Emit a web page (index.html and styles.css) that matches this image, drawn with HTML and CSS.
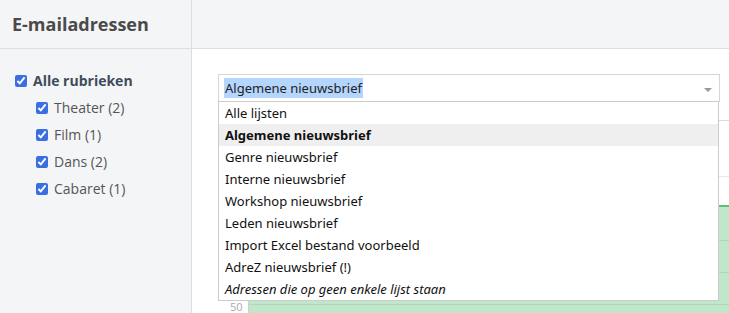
FILE: index.html
```html
<html lang="nl">
<head>
  <meta charset="UTF-8" />
  <title>E-mailadressen</title>
  <link rel="stylesheet" href="styles.css">
</head>

<body>
  <div class="page">
    <aside class="sidebar">
      <div class="head">
        <h1>E-mailadressen</h1>
      </div>

      <ul class="rubrieken">
        <li class="all"><label><input type="checkbox" checked> Alle rubrieken</label></li>
        <li class="sub"><label><input type="checkbox" checked> Theater (2)</label></li>
        <li class="sub"><label><input type="checkbox" checked> Film (1)</label></li>
        <li class="sub"><label><input type="checkbox" checked> Dans (2)</label></li>
        <li class="sub"><label><input type="checkbox" checked> Cabaret (1)</label></li>
      </ul>
    </aside>

    <main class="content">
      <div class="head"></div>

      <div class="body">
        <!-- select met open lijst -->
        <div class="select">
          <span class="current"><span class="selected-text">Algemene nieuwsbrief</span></span>
          <span class="arrow"></span>

          <ul class="options">
            <li>Alle lijsten</li>
            <li class="active">Algemene nieuwsbrief</li>
            <li>Genre nieuwsbrief</li>
            <li>Interne nieuwsbrief</li>
            <li>Workshop nieuwsbrief</li>
            <li>Leden nieuwsbrief</li>
            <li>Import Excel bestand voorbeeld</li>
            <li>AdreZ nieuwsbrief (!)</li>
            <li class="none">Adressen die op geen enkele lijst staan</li>
          </ul>
        </div>

        <!-- paneel achter de lijst -->
        <div class="panel">
          <div class="tabs"></div>
          <div class="chart">
            <div class="axis"><span>50</span></div>
            <div class="plot">
              <div class="grid"></div>
              <div class="grid"></div>
              <div class="grid"></div>
            </div>
          </div>
        </div>
      </div>
    </main>
  </div>
</body>
</html>
```

FILE: styles.css
```css
body {
  margin: 0;
  font-family: "Open Sans", "Noto Sans", sans-serif;
  background: #fff;
  overflow: hidden;
}

.page {
  display: grid;
  grid-template-columns: 192px 1fr;
  width: 729px;
  height: 313px;
}

.head {
  height: 48px;
  background: #f4f5f7;
  border-bottom: 1px solid #dcdee3;
  display: flex;
  align-items: center;
}

h1 {
  margin: 0 0 0 12px;
  font-size: 18px;
  font-weight: 700;
  color: #4a4a4a;
}

.sidebar {
  background: #f4f5f7;
  border-right: 1px solid #dcdee3;
}

.rubrieken {
  list-style: none;
  margin: 0;
  padding: 18px 0 0 15px;
}

.rubrieken li {
  height: 27px;
  display: flex;
  align-items: center;
  font-size: 14px;
  color: #555;
}

.rubrieken label {
  display: flex;
  align-items: center;
  gap: 6px;
}

.rubrieken input {
  margin: 0;
  width: 12px;
  height: 12px;
  accent-color: #3a6fe4;
}

.rubrieken .all {
  font-weight: 700;
  color: #3f4b5b;
}

.rubrieken .sub {
  padding-left: 21px;
}

.content {
  min-width: 0;
}

.content .body {
  padding: 25px 9px 0 26px;
}

.select {
  position: relative;
  height: 26px;
  border: 1px solid #d6d6d6;
  display: flex;
  align-items: center;
  padding-left: 5px;
  font-family: "Noto Sans", "Open Sans", sans-serif;
  font-size: 13px;
  color: #222;
}

.selected-text {
  background: #b4d5fe;
  padding: 1px 1px;
}

.arrow {
  position: absolute;
  right: 7px;
  top: 13px;
  border-left: 4px solid transparent;
  border-right: 4px solid transparent;
  border-top: 4px solid #999;
}

.options {
  position: absolute;
  z-index: 2;
  top: 26px;
  left: -1px;
  width: 499px;
  margin: 0;
  padding: 0;
  list-style: none;
  background: #fff;
  border: 1px solid #ccc;
}

.options li {
  height: 22px;
  line-height: 22px;
  padding-left: 6px;
  color: #111;
  white-space: nowrap;
}

.options .active {
  background: #efefef;
  font-weight: 700;
}

.options .none {
  font-style: italic;
}

.panel {
  margin-top: 18px;
  margin-right: -9px;
  border-top: 1px solid #dcdcdc;
}

.tabs {
  height: 55px;
  border-bottom: 1px solid #e8e8e8;
}

.chart {
  display: flex;
  margin-top: 28px;
  height: 120px;
}

.axis {
  width: 30px;
  position: relative;
  font-size: 11px;
  color: #aaa;
}

.axis span {
  position: absolute;
  left: 12px;
  top: 94px;
}

.plot {
  flex: 1;
  background: #c1e7cb;
  border-top: 2px solid #62bd74;
  border-left: 1px solid #cfcfcf;
  display: flex;
  flex-direction: column;
  gap: 31px;
  padding-top: 33px;
}

.grid {
  height: 1px;
  background: #afd7ba;
}
```
